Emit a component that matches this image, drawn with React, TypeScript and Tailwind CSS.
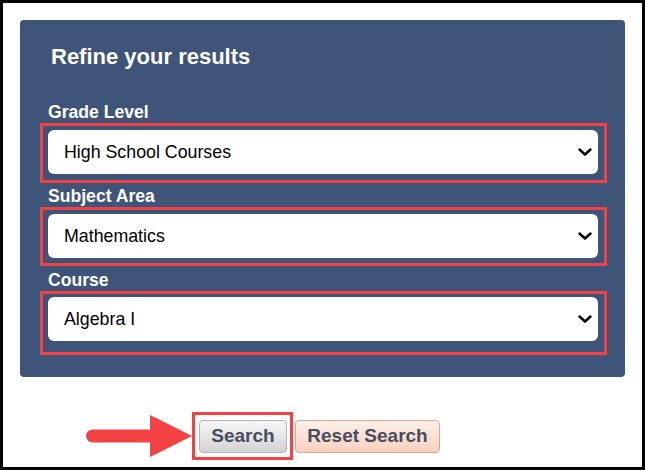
const FIELDS = [
  { label: 'Grade Level', value: 'High School Courses', labelGap: 'mt-[32px]', box: 'pt-[4px] pb-[6px]' },
  { label: 'Subject Area', value: 'Mathematics', labelGap: 'mt-[3px]', box: 'pt-[4px] pb-[5px]' },
  { label: 'Course', value: 'Algebra I', labelGap: 'mt-[4px]', box: 'pt-[3px] pb-[11px]' },
];

function Chevron() {
  return (
    <svg width="14" height="8" viewBox="0 0 14 8" className="shrink-0">
      <polyline points="1.5,1.5 7,6.5 12.5,1.5" fill="none" stroke="#000" strokeWidth="2.4" strokeLinecap="round" strokeLinejoin="round" />
    </svg>
  );
}

function Arrow() {
  return (
    <svg width="106" height="42" viewBox="0 0 106 42" className="shrink-0">
      <rect x="0" y="14.5" width="68" height="13" rx="6.5" fill="#f44242" />
      <polygon points="64,0 106,21 64,42" fill="#f44242" />
    </svg>
  );
}

export default function App() {
  return (
    <div className="h-[470px] w-[645px] border-[3px] border-black bg-white font-['Liberation_Sans',Arial,sans-serif]">
      <div className="ml-[17px] mt-[17px] w-[605px] rounded-[4px] bg-[#3e5479] pb-[22px] pl-[20px] pr-[18px] pt-[24px]">
        <h2 className="pl-[11px] text-[22px] font-bold leading-[26px] text-white">Refine your results</h2>
        {FIELDS.map((f) => (
          <div key={f.label}>
            <label className={`block pl-[8px] text-[17.6px] font-bold leading-[20px] text-white ${f.labelGap}`}>{f.label}</label>
            <div className={`mt-[1px] border-[3px] border-[#f44242] pl-[5px] pr-[6px] ${f.box}`}>
              <div className="flex h-[44px] items-center justify-between rounded-[6px] bg-white pl-[16px] pr-[6px]">
                <span className="text-[17.8px] text-black">{f.value}</span>
                <Chevron />
              </div>
            </div>
          </div>
        ))}
      </div>

      <div className="ml-[83px] mt-[35px] flex items-center">
        <Arrow />
        <div className="border-[3px] border-[#f44242] pb-[4px] pl-[4px] pr-[3px] pt-[5px]">
          <button className="h-[33px] w-[88px] rounded-[4px] border border-[#b5b5b5] bg-gradient-to-b from-[#f7f7f7] to-[#d3d3d3] text-[19px] font-bold text-[#474e60]">
            Search
          </button>
        </div>
        <button className="ml-[2px] h-[33px] w-[145px] rounded-[4px] border border-[#e5a28c] bg-gradient-to-b from-[#fdf0ea] to-[#f8d0c0] text-[19px] font-bold text-[#474e60]">
          Reset Search
        </button>
      </div>
    </div>
  );
}
